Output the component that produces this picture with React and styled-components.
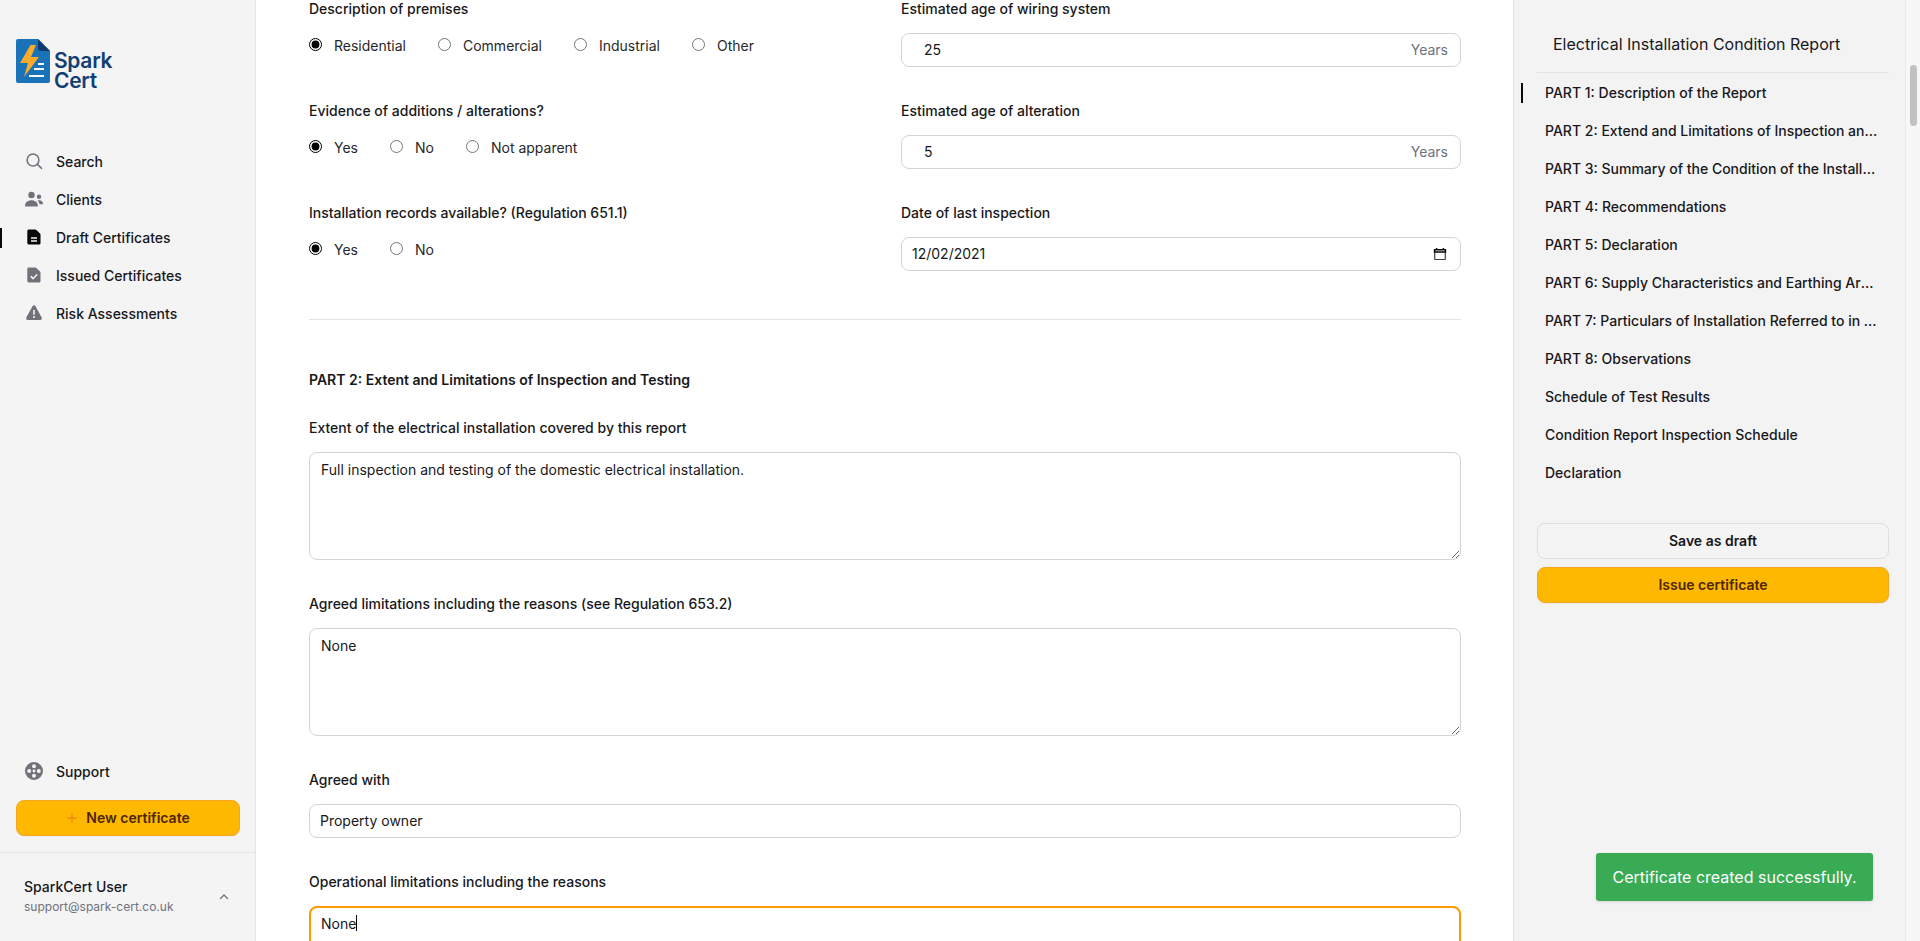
import React, { useEffect, useRef } from "react";
import styled, { createGlobalStyle } from "styled-components";

const Global = createGlobalStyle`
  html, body { margin: 0; padding: 0; height: 100%; overflow: hidden; background: #fff; }
  body { font-family: Inter, "Liberation Sans", sans-serif; color: #18181b; -webkit-font-smoothing: antialiased; }
  * { box-sizing: border-box; }
`;

const Page = styled.div`
  position: relative;
  display: flex;
  width: 100%;
  height: 941px;
  overflow: hidden;
`;

const Sidebar = styled.aside`
  flex: 0 0 256px;
  display: flex;
  flex-direction: column;
  background: #f4f4f5;
  border-right: 1px solid #e4e4e7;
`;

const Brand = styled.div`
  display: flex;
  gap: 4px;
  padding: 39px 0 0 16px;
  height: 143px;
`;

const BrandName = styled.div`
  font-size: 21px;
  line-height: 20px;
  font-weight: 600;
  letter-spacing: -0.3px;
  color: #123f73;
  padding-top: 12px;
`;

const Nav = styled.nav`
  display: flex;
  flex-direction: column;
`;

const NavItem = styled.a`
  position: relative;
  display: flex;
  align-items: center;
  height: 38px;
  padding: 0 0 2px 24px;
  gap: 12px;
  font-size: 14px;
  font-weight: 500;
  color: #18181b;
  svg { flex: 0 0 20px; color: ${(p) => (p.$active ? "#09090b" : "#71717a")}; }
  &::before {
    content: "";
    display: ${(p) => (p.$active ? "block" : "none")};
    position: absolute;
    left: 0;
    top: 9px;
    width: 2px;
    height: 20px;
    background: #09090b;
  }
`;

const Spacer = styled.div`
  flex: 1;
`;

const PrimaryButton = styled.button`
  display: flex;
  align-items: center;
  justify-content: center;
  gap: 8px;
  width: 100%;
  height: 36px;
  padding: 0 0 1px;
  border: 1px solid #f5a623;
  border-radius: 8px;
  background: #ffb800;
  color: #4d2600;
  font: 600 14px Inter, sans-serif;
  box-shadow: 0 1px 1px rgba(0, 0, 0, 0.04);
`;

const SideAction = styled.div`
  padding: 9px 15px 16px 16px;
  border-bottom: 1px solid #e4e4e7;
`;

const UserRow = styled.div`
  display: flex;
  align-items: center;
  justify-content: space-between;
  height: 88px;
  padding: 0 25px 0 24px;
  svg { color: #71717a; }
`;

const UserName = styled.div`
  font-size: 14px;
  line-height: 20px;
  font-weight: 500;
  color: #18181b;
`;

const UserMail = styled.div`
  font-size: 12px;
  line-height: 20px;
  color: #71717a;
`;

const Main = styled.main`
  flex: 0 0 1257px;
  min-width: 0;
  height: 941px;
  overflow: hidden;
  padding: 0 52px 0 53px;
  background: #fff;
`;

const Form = styled.div`
  margin-top: -1px;
`;

const TopGrid = styled.div`
  display: grid;
  grid-template-columns: 560px 560px;
  column-gap: 32px;
`;

const Field = styled.div`
  margin-bottom: ${(p) => (p.$stacked ? 34 : 33)}px;
`;

const Label = styled.div`
  font-size: 14px;
  line-height: 20px;
  font-weight: 500;
  color: #18181b;
  margin-bottom: 15px;
`;

const RadioRow = styled.div`
  display: flex;
  gap: 32px;
  height: 34px;
  padding-top: 2px;
`;

const RadioLabel = styled.label`
  display: flex;
  align-items: flex-start;
  gap: 12px;
  font-size: 14px;
  line-height: 20px;
  color: #27272a;
`;

const Radio = styled.input.attrs({ type: "radio" })`
  width: 13px;
  height: 13px;
  margin: 2px 0 0;
  accent-color: #000;
`;

const InputBox = styled.div`
  display: flex;
  align-items: center;
  height: 34px;
  margin-top: -1px;
  padding: 0 ${(p) => p.$right || 12}px 1px ${(p) => p.$left || 10}px;
  border: 1px solid #d4d4d8;
  border-radius: 8px;
  background: #fff;
`;

const InputText = styled.input`
  flex: 1;
  min-width: 0;
  border: 0;
  padding: 0;
  outline: none;
  background: transparent;
  font: 400 14px Inter, sans-serif;
  color: #18181b;
`;

const Suffix = styled.span`
  font-size: 14px;
  color: #6b7280;
`;

const Divider = styled.hr`
  border: 0;
  height: 1px;
  margin: 14px 0 50px;
  background: #e4e4e7;
`;

const SectionTitle = styled.div`
  font-size: 14px;
  line-height: 20px;
  font-weight: 600;
  color: #18181b;
  margin-bottom: 28px;
`;

const AreaWrap = styled.div`
  position: relative;
  margin-top: -1px;
`;

const TextArea = styled.textarea`
  display: block;
  width: 100%;
  height: 108px;
  padding: 7px 10px 7px 11px;
  border: 1px solid #d4d4d8;
  border-radius: 8px;
  outline: none;
  background: #fff;
  font: 400 14px/20px Inter, sans-serif;
  color: #18181b;
  &:focus {
    border: 2px solid #ff9900;
    padding: 6px 9px 6px 10px;
    caret-color: transparent;
  }
`;

const Caret = styled.span`
  position: absolute;
  left: 47px;
  top: 9px;
  width: 1px;
  height: 16px;
  background: #000;
`;

const Outline = styled.aside`
  flex: 0 0 392px;
  width: 392px;
  min-width: 0;
  display: flex;
  flex-direction: column;
  padding: 0 16px 0 23px;
  background: #f3f3f4;
  border-left: 1px solid #e4e4e7;
`;

const OutlineTitle = styled.div`
  padding: 32px 16px 16px;
  font-size: 16px;
  line-height: 24px;
  font-weight: 400;
  color: #18181b;
  border-bottom: 1px solid #e4e4e7;
  margin-bottom: 1px;
`;

const OutlineItem = styled.a`
  position: relative;
  display: block;
  height: 38px;
  padding: 0 11px 0 8px;
  font-size: 14px;
  line-height: 38px;
  font-weight: 500;
  color: #18181b;
  &::before {
    content: "";
    display: ${(p) => (p.$active ? "block" : "none")};
    position: absolute;
    left: -16px;
    top: 9px;
    width: 2px;
    height: 20px;
    background: #09090b;
  }
`;

const Ellipsis = styled.span`
  display: block;
  overflow: hidden;
  white-space: nowrap;
  text-overflow: ellipsis;
`;

const OutlineActions = styled.div`
  display: flex;
  flex-direction: column;
  gap: 8px;
  margin-top: 31px;
`;

const GhostButton = styled.button`
  width: 100%;
  height: 36px;
  padding: 0 0 1px;
  border: 1px solid #e0e0e3;
  border-radius: 8px;
  background: #f4f4f5;
  color: #18181b;
  font: 600 14px Inter, sans-serif;
`;

const ScrollTrack = styled.div`
  flex: 0 0 15px;
  padding: 65px 4px 0 4px;
  background: #f7f7f7;
  border-left: 1px solid #ebebeb;
`;

const ScrollThumb = styled.div`
  width: 7px;
  height: 61px;
  border-radius: 4px;
  background: #c1c1c1;
`;

const Toast = styled.div`
  position: absolute;
  left: 1596px;
  top: 853px;
  width: 277px;
  height: 48px;
  display: flex;
  align-items: center;
  justify-content: center;
  border-radius: 3px;
  background: #38ab54;
  color: #fff;
  font-size: 16px;
  box-shadow: 0 1px 3px rgba(0, 0, 0, 0.12);
`;

const Logo = () => (
  <svg width="34" height="44" viewBox="0 0 34 44">
    <path d="M2 0h20l12 12v30a2 2 0 0 1-2 2H2a2 2 0 0 1-2-2V2a2 2 0 0 1 2-2z" fill="#1a72b8" />
    <path d="M22 0l12 12h-9a3 3 0 0 1-3-3z" fill="#0f3c70" />
    <path d="M14.5 6L4 24h8l-4 14 15-20h-8l5-12z" fill="#f9ab2c" />
    <path d="M22 24h6v2h-6zM18 29h10v2H18zM13 36h15v2H13z" fill="#fff" opacity="0.95" />
  </svg>
);

const SearchIcon = () => (
  <svg width="20" height="20" viewBox="0 0 20 20" fill="none" stroke="currentColor" strokeWidth="1.5" strokeLinecap="round">
    <circle cx="9" cy="9" r="5.9" />
    <path d="M13.4 13.4L17.6 17.4" />
  </svg>
);

const UsersIcon = () => (
  <svg width="20" height="20" viewBox="0 0 20 20" fill="currentColor">
    <circle cx="7.5" cy="6" r="3.2" />
    <path d="M1 16.8c0-3.4 2.7-5.6 6.5-5.6s6.4 2.2 6.4 5.6c0 .4-.2.6-.6.6H1.6c-.4 0-.6-.2-.6-.6z" />
    <circle cx="15" cy="7.8" r="2.2" />
    <path d="M15.2 11.2c2.3 0 3.8 1.5 3.8 3.6 0 .3-.2.5-.5.5h-3c-.2-1.6-.9-3-2-3.8.5-.2 1-.3 1.7-.3z" />
  </svg>
);

const DraftIcon = () => (
  <svg width="20" height="20" viewBox="0 0 20 20" fill="currentColor">
    <path fillRule="evenodd" d="M5 2.5h6.2c.5 0 .9.2 1.2.5l3.6 3.6c.3.3.5.7.5 1.2v8.2c0 1-.8 1.5-1.5 1.5H5c-1 0-1.7-.6-1.7-1.5V4c0-.9.7-1.5 1.7-1.5zM7 10.2v1.6h6v-1.6zM7 13.2v1.6h6v-1.6z" />
  </svg>
);

const IssuedIcon = () => (
  <svg width="20" height="20" viewBox="0 0 20 20" fill="currentColor">
    <path d="M5 2.5h6.2c.5 0 .9.2 1.2.5l3.6 3.6c.3.3.5.7.5 1.2v8.2c0 1-.8 1.5-1.5 1.5H5c-1 0-1.7-.6-1.7-1.5V4c0-.9.7-1.5 1.7-1.5z" />
    <path d="M7.2 11.6l2 2 3.6-3.8" fill="none" stroke="#f4f4f5" strokeWidth="1.5" strokeLinecap="round" strokeLinejoin="round" />
  </svg>
);

const WarnIcon = () => (
  <svg width="20" height="20" viewBox="0 0 20 20" fill="currentColor">
    <path fillRule="evenodd" d="M8.5 3.2c.7-1.2 2.4-1.2 3 0l6.2 11.3c.6 1.2-.2 2.6-1.5 2.6H3.8c-1.3 0-2.1-1.4-1.5-2.6zM9.2 7v4.8h1.6V7zM10 13a1 1 0 1 0 0 2 1 1 0 0 0 0-2z" />
  </svg>
);

const SupportIcon = () => (
  <svg width="20" height="20" viewBox="0 0 20 20">
    <path fill="currentColor" fillRule="evenodd" d="M10 1a9 9 0 1 1 0 18 9 9 0 0 1 0-18zM10 3.2a2 2 0 1 0 0 4 2 2 0 0 0 0-4zM10 12.8a2 2 0 1 0 0 4 2 2 0 0 0 0-4zM5.2 8a2 2 0 1 0 0 4 2 2 0 0 0 0-4zM14.8 8a2 2 0 1 0 0 4 2 2 0 0 0 0-4zM10 8.6a1.4 1.4 0 1 0 0 2.8 1.4 1.4 0 0 0 0-2.8z" />
  </svg>
);

const PlusIcon = () => (
  <svg width="12" height="12" viewBox="0 0 12 12" stroke="#f08a14" strokeWidth="1.4" fill="none">
    <path d="M6 1.2v9.6M1.2 6h9.6" />
  </svg>
);

const ChevronUp = () => (
  <svg width="12" height="12" viewBox="0 0 12 12" fill="none" stroke="currentColor" strokeWidth="1.3" strokeLinecap="round" strokeLinejoin="round">
    <path d="M2.5 7.5L6 4l3.5 3.5" />
  </svg>
);

const CalendarIcon = () => (
  <svg width="14" height="14" viewBox="0 0 14 14" fill="none">
    <rect x="1.7" y="2.5" width="10.6" height="10" rx="0.6" stroke="#3f3f46" strokeWidth="1.2" />
    <path d="M1.5 2.8h11v2.2h-11zM3.6 1v2M10.4 1v2" stroke="#09090b" strokeWidth="1.4" />
  </svg>
);

const RadioGroup = ({ name, options }) => (
  <RadioRow>
    {options.map((o, i) => (
      <RadioLabel key={o}>
        <Radio name={name} defaultChecked={i === 0} />
        {o}
      </RadioLabel>
    ))}
  </RadioRow>
);

const parts = [
  "PART 1: Description of the Report",
  "PART 2: Extend and Limitations of Inspection and Testing",
  "PART 3: Summary of the Condition of the Installation",
  "PART 4: Recommendations",
  "PART 5: Declaration",
  "PART 6: Supply Characteristics and Earthing Arrangements",
  "PART 7: Particulars of Installation Referred to in the Report",
  "PART 8: Observations",
  "Schedule of Test Results",
  "Condition Report Inspection Schedule",
  "Declaration",
];

export default function App() {
  const focusRef = useRef(null);
  useEffect(() => {
    const el = focusRef.current;
    if (el) {
      el.focus({ preventScroll: true });
      el.setSelectionRange(4, 4);
    }
  }, []);

  return (
    <Page>
      <Global />
      <Sidebar>
        <Brand>
          <Logo />
          <BrandName>
            Spark
            <br />
            Cert
          </BrandName>
        </Brand>
        <Nav>
          <NavItem><SearchIcon />Search</NavItem>
          <NavItem><UsersIcon />Clients</NavItem>
          <NavItem $active><DraftIcon />Draft Certificates</NavItem>
          <NavItem><IssuedIcon />Issued Certificates</NavItem>
          <NavItem><WarnIcon />Risk Assessments</NavItem>
        </Nav>
        <Spacer />
        <NavItem><SupportIcon />Support</NavItem>
        <SideAction>
          <PrimaryButton><PlusIcon />New certificate</PrimaryButton>
        </SideAction>
        <UserRow>
          <div>
            <UserName>SparkCert User</UserName>
            <UserMail>support@spark-cert.co.uk</UserMail>
          </div>
          <ChevronUp />
        </UserRow>
      </Sidebar>

      <Main>
        <Form>
          <TopGrid>
            <Field>
              <Label>Description of premises</Label>
              <RadioGroup name="premises" options={["Residential", "Commercial", "Industrial", "Other"]} />
            </Field>
            <Field>
              <Label>Estimated age of wiring system</Label>
              <InputBox $left={22}>
                <InputText defaultValue="25" />
                <Suffix>Years</Suffix>
              </InputBox>
            </Field>
            <Field>
              <Label>Evidence of additions / alterations?</Label>
              <RadioGroup name="evidence" options={["Yes", "No", "Not apparent"]} />
            </Field>
            <Field>
              <Label>Estimated age of alteration</Label>
              <InputBox $left={22}>
                <InputText defaultValue="5" />
                <Suffix>Years</Suffix>
              </InputBox>
            </Field>
            <Field>
              <Label>Installation records available? (Regulation 651.1)</Label>
              <RadioGroup name="records" options={["Yes", "No"]} />
            </Field>
            <Field>
              <Label>Date of last inspection</Label>
              <InputBox $right={13}>
                <InputText defaultValue="12/02/2021" />
                <CalendarIcon />
              </InputBox>
            </Field>
          </TopGrid>
          <Divider />
          <SectionTitle>PART 2: Extent and Limitations of Inspection and Testing</SectionTitle>
          <Field $stacked>
            <Label>Extent of the electrical installation covered by this report</Label>
            <AreaWrap>
              <TextArea defaultValue="Full inspection and testing of the domestic electrical installation." />
            </AreaWrap>
          </Field>
          <Field $stacked>
            <Label>Agreed limitations including the reasons (see Regulation 653.2)</Label>
            <AreaWrap>
              <TextArea defaultValue="None" />
            </AreaWrap>
          </Field>
          <Field $stacked>
            <Label>Agreed with</Label>
            <InputBox>
              <InputText defaultValue="Property owner" />
            </InputBox>
          </Field>
          <Field $stacked>
            <Label>Operational limitations including the reasons</Label>
            <AreaWrap>
              <TextArea ref={focusRef} defaultValue="None" />
              <Caret />
            </AreaWrap>
          </Field>
        </Form>
      </Main>

      <Outline>
        <OutlineTitle>Electrical Installation Condition Report</OutlineTitle>
        {parts.map((p, i) => (
          <OutlineItem key={p} $active={i === 0}>
            <Ellipsis>{p}</Ellipsis>
          </OutlineItem>
        ))}
        <OutlineActions>
          <GhostButton>Save as draft</GhostButton>
          <PrimaryButton>Issue certificate</PrimaryButton>
        </OutlineActions>
      </Outline>

      <ScrollTrack>
        <ScrollThumb />
      </ScrollTrack>

      <Toast>Certificate created successfully.</Toast>
    </Page>
  );
}
